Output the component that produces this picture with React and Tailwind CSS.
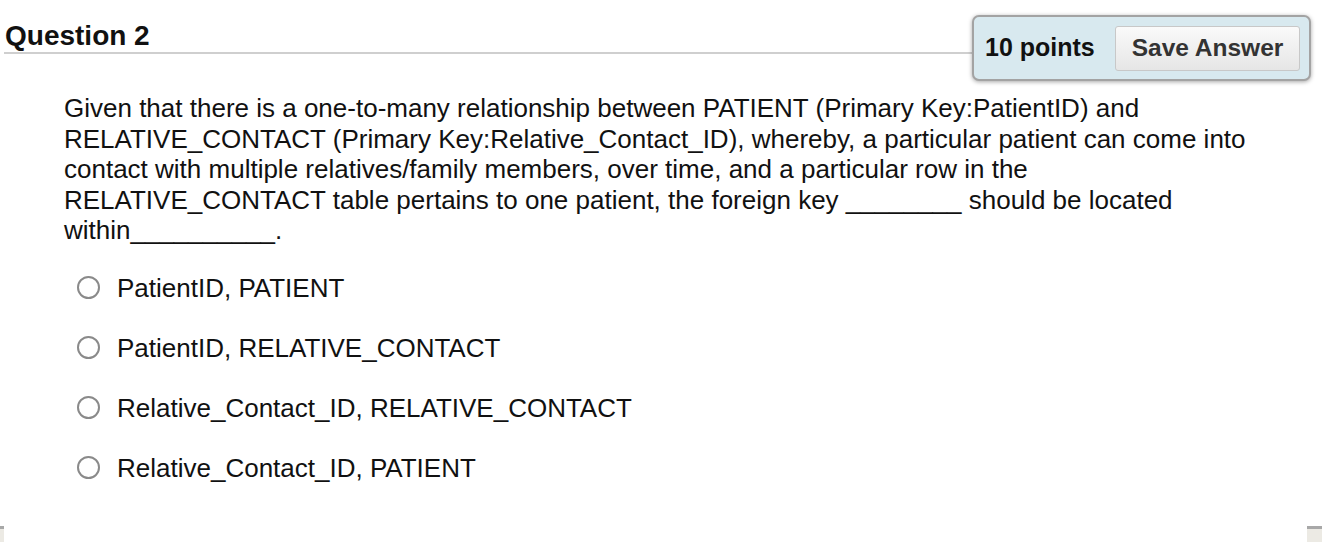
import React from 'react';

const options = [
  'PatientID, PATIENT',
  'PatientID, RELATIVE_CONTACT',
  'Relative_Contact_ID, RELATIVE_CONTACT',
  'Relative_Contact_ID, PATIENT',
];

export default function App() {
  return (
    <div className="min-h-[542px] flex flex-col bg-white text-[#111] font-['Liberation_Sans',Arial,sans-serif]">
      {/* Header: title + points box */}
      <div className="flex items-start pl-[4px] pr-[11px] pt-[15px]">
        <div className="flex-1 h-[39px] border-b-2 border-[#cfcfcf]">
          <h2 className="pl-[1px] pt-[7px] text-[28px] font-bold leading-none text-[#111]">Question 2</h2>
        </div>
        <div className="w-[339px] h-[66px] flex items-center justify-between pl-[11px] pr-[9px] rounded-[7px] border-2 border-[#a3a3a3] bg-[#d8e9ef] shadow-[0_1px_4px_rgba(0,0,0,0.35)]">
          <span className="text-[25px] font-bold text-[#111]">10 points</span>
          <button className="w-[185px] h-[45px] rounded-[3px] border border-[#c8c8c8] bg-gradient-to-b from-[#fafafa] to-[#e6e6e6] text-[24.5px] font-bold text-[#333]">
            Save Answer
          </button>
        </div>
      </div>

      {/* Question text */}
      <div className="ml-[64px] mt-[12px] w-[1200px] text-[26px] leading-[30.5px]">
        Given that there is a one-to-many relationship between PATIENT (Primary Key:PatientID) and
        RELATIVE_CONTACT (Primary Key:Relative_Contact_ID), whereby, a particular patient can come into
        contact with multiple relatives/family members, over time, and a particular row in the
        RELATIVE_CONTACT table pertains to one patient, the foreign key ________ should be located
        within__________.
      </div>

      {/* Answer options */}
      <div className="ml-[77px] mt-[31px] flex flex-col gap-[38px]">
        {options.map((opt) => (
          <label key={opt} className="flex items-center h-[22px]">
            <span className="w-[23px] h-[23px] rounded-full border-2 border-[#8a8a8a] bg-white shrink-0" />
            <span className="ml-[17px] text-[26px] leading-none">{opt}</span>
          </label>
        ))}
      </div>

      {/* Bottom frame stubs */}
      <div className="mt-auto flex justify-between items-end">
        <div className="w-[4px] h-[16px] border-t-[3px] border-[#a8a8a8] bg-[#eceae4]" />
        <div className="w-[15px] h-[16px] border-t-[3px] border-[#a8a8a8] bg-[#eceae4]" />
      </div>
    </div>
  );
}
